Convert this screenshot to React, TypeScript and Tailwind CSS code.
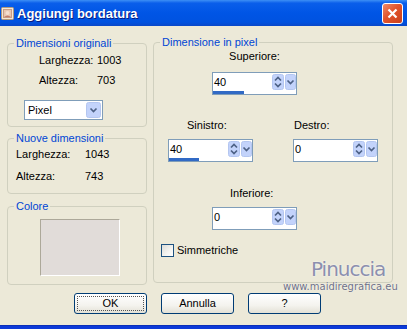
import React from 'react';

function UpDown() {
  return (
    <svg width="12" height="16" viewBox="0 0 12 16" className="shrink-0">
      <rect x="0.5" y="0.5" width="11" height="15" rx="2" fill="#c3d3fb" stroke="#b4c6f0" />
      <path d="M3 6.5 L6 3.5 L9 6.5" stroke="#4d6185" strokeWidth="1.7" fill="none" />
      <path d="M3 9.5 L6 12.5 L9 9.5" stroke="#4d6185" strokeWidth="1.7" fill="none" />
    </svg>
  );
}

function DropBtn({ w = 11, h = 16 }: { w?: number; h?: number }) {
  const cx = w / 2;
  const cy = h / 2;
  return (
    <svg width={w} height={h} viewBox={`0 0 ${w} ${h}`} className="shrink-0">
      <rect x="0.5" y="0.5" width={w - 1} height={h - 1} rx="2" fill="#c3d3fb" stroke="#b4c6f0" />
      <path
        d={`M${cx - 3} ${cy - 1.5} L${cx} ${cy + 1.5} L${cx + 3} ${cy - 1.5}`}
        stroke="#4d6185"
        strokeWidth="1.7"
        fill="none"
      />
    </svg>
  );
}

function Spin({ value, fill }: { value: string; fill: number }) {
  return (
    <div className="flex h-[23px] w-[85px] flex-col border border-[#7f9db9] bg-white">
      <div className="flex h-[17px] items-center">
        <span className="flex-1 pl-[1px] pt-px leading-none">{value}</span>
        <UpDown />
        <div className="w-px" />
        <DropBtn />
      </div>
      <div className="mt-px h-[3px]">
        <div className="h-full bg-[#316ac5]" style={{ width: fill }} />
      </div>
    </div>
  );
}

function Group({
  title,
  className,
  children,
}: {
  title: string;
  className: string;
  children: React.ReactNode;
}) {
  return (
    <fieldset className={`rounded-[4px] border border-[#d0d0bf] ${className}`}>
      <legend className="ml-[6px] px-[2px] text-[11px] leading-[12px] text-[#0046d5]">{title}</legend>
      {children}
    </fieldset>
  );
}

function Button({ label, focused }: { label: string; focused?: boolean }) {
  return (
    <div className="flex h-[21px] w-[73px] items-center justify-center rounded-[3px] border border-[#003c74] bg-[linear-gradient(180deg,#ffffff_0%,#f4f3ee_60%,#e3e1d6_100%)] p-[2px]">
      <div
        className={`flex h-full w-full items-center justify-center ${
          focused ? 'border border-dotted border-[#555]' : ''
        }`}
      >
        {label}
      </div>
    </div>
  );
}

export default function App() {
  return (
    <div className="flex h-[329px] w-[407px] flex-col overflow-hidden bg-[#ece9d8] font-['Liberation_Sans',Arial,sans-serif] text-[11px] leading-[13px] text-black">
      {/* title bar */}
      <div className="flex h-[26px] shrink-0 items-center bg-[linear-gradient(180deg,#3d8ff5_0%,#0a5eea_12%,#0055e5_50%,#0052e0_85%,#0a48c8_100%)] pr-[4px]">
        <svg width="13" height="13" viewBox="0 0 13 13" className="ml-[1px] shrink-0">
          <rect x="0.5" y="0.5" width="12" height="12" rx="1" fill="#f3e6d6" stroke="#b49a7c" />
          <rect x="2.5" y="2.5" width="8" height="8" fill="#e8c6b0" stroke="#c89d84" />
          <circle cx="6.5" cy="6" r="2" fill="#f6dfcf" />
          <path d="M3 10 Q6.5 7 10 10" fill="#c47d6a" />
        </svg>
        <span className="ml-[3px] font-['Liberation_Sans',Arial,sans-serif] text-[13px] font-bold text-white [text-shadow:1px_1px_#0a1c80]">
          Aggiungi bordatura
        </span>
        <div className="ml-auto flex h-[21px] w-[21px] items-center justify-center rounded-[3px] border border-white bg-[linear-gradient(135deg,#ee8a6a_0%,#e2542c_45%,#c9401c_100%)]">
          <svg width="11" height="11" viewBox="0 0 11 11">
            <path d="M1.5 1.5 L9.5 9.5 M9.5 1.5 L1.5 9.5" stroke="#fff" strokeWidth="2.2" />
          </svg>
        </div>
      </div>

      {/* body */}
      <div className="relative flex-1 px-[7px] pt-[10px]">
        <div className="flex gap-[6px]">
          <div className="mt-px flex w-[140px] flex-col">
            <Group title="Dimensioni originali" className="h-[90px]">
              <div className="flex flex-col pl-[31px] pt-[5px]">
                <div className="flex h-[13px]">
                  <span className="w-[58px]">Larghezza:</span>
                  <span>1003</span>
                </div>
                <div className="mt-[7px] flex h-[13px]">
                  <span className="w-[58px]">Altezza:</span>
                  <span>703</span>
                </div>
              </div>
              <div className="ml-[16px] mt-[13px] flex h-[20px] w-[79px] items-center border border-[#7f9db9] bg-white pr-[1px]">
                <span className="flex-1 pl-[3px]">Pixel</span>
                <DropBtn w={15} h={16} />
              </div>
            </Group>

            <Group title="Nuove dimensioni" className="mt-[5px] h-[62px]">
              <div className="flex flex-col pl-[8px] pt-[4px]">
                <div className="flex h-[13px]">
                  <span className="w-[69px]">Larghezza:</span>
                  <span>1043</span>
                </div>
                <div className="mt-[9px] flex h-[13px]">
                  <span className="w-[69px]">Altezza:</span>
                  <span>743</span>
                </div>
              </div>
            </Group>

            <Group title="Colore" className="mt-[6px] h-[85px]">
              <div className="ml-[32px] mt-[7px] h-[57px] w-[80px] border border-b-white border-l-[#aca899] border-r-white border-t-[#aca899] bg-[#e1dcd9]" />
            </Group>
          </div>

          <Group title="Dimensione in pixel" className="h-[247px] w-[240px]">
            <div className="flex flex-col">
              <div className="ml-[58px] mt-[2px] flex w-[85px] flex-col items-center">
                <span>Superiore:</span>
                <div className="mt-[9px]">
                  <Spin value="40" fill={31} />
                </div>
              </div>

              <div className="mt-[24px] flex">
                <div className="ml-[14px] flex flex-col">
                  <span className="ml-[19px]">Sinistro:</span>
                  <div className="mt-[7px]">
                    <Spin value="40" fill={30} />
                  </div>
                </div>
                <div className="ml-[40px] flex flex-col">
                  <span className="ml-[1px]">Destro:</span>
                  <div className="mt-[7px]">
                    <Spin value="0" fill={0} />
                  </div>
                </div>
              </div>

              <div className="ml-[58px] mt-[25px] flex flex-col">
                <span className="ml-[18px]">Inferiore:</span>
                <div className="mt-[7px]">
                  <Spin value="0" fill={0} />
                </div>
              </div>

              <div className="ml-[7px] mt-[14px] flex items-center">
                <div className="h-[13px] w-[13px] border border-[#1c5180] bg-[linear-gradient(135deg,#dcdcd7_0%,#f4f4f1_60%,#ffffff_100%)]" />
                <span className="ml-[3px]">Simmetriche</span>
              </div>
            </div>
          </Group>
        </div>

        <div className="ml-[67px] mt-[8px] flex gap-[14px]">
          <Button label="OK" focused />
          <Button label="Annulla" />
          <Button label="?" />
        </div>

        {/* watermark */}
        <div className="pointer-events-none absolute left-[311px] top-[233px] font-['DejaVu_Sans',sans-serif] text-[20px] leading-[20px] tracking-[-1px] text-[#8c8fae] [text-shadow:0_0_2px_#ffffff]">
          Pinuccia
        </div>
        <div className="pointer-events-none absolute left-[283px] top-[256px] font-['DejaVu_Sans',sans-serif] text-[10px] leading-[10px] text-[#6e7086] [text-shadow:0_0_1px_#ffffff]">
          www.maidiregrafica.eu
        </div>
      </div>

      {/* bottom frame */}
      <div className="h-[4px] shrink-0 border-t border-[#0a2fb8] bg-[#0c3ad8]" />
    </div>
  );
}
